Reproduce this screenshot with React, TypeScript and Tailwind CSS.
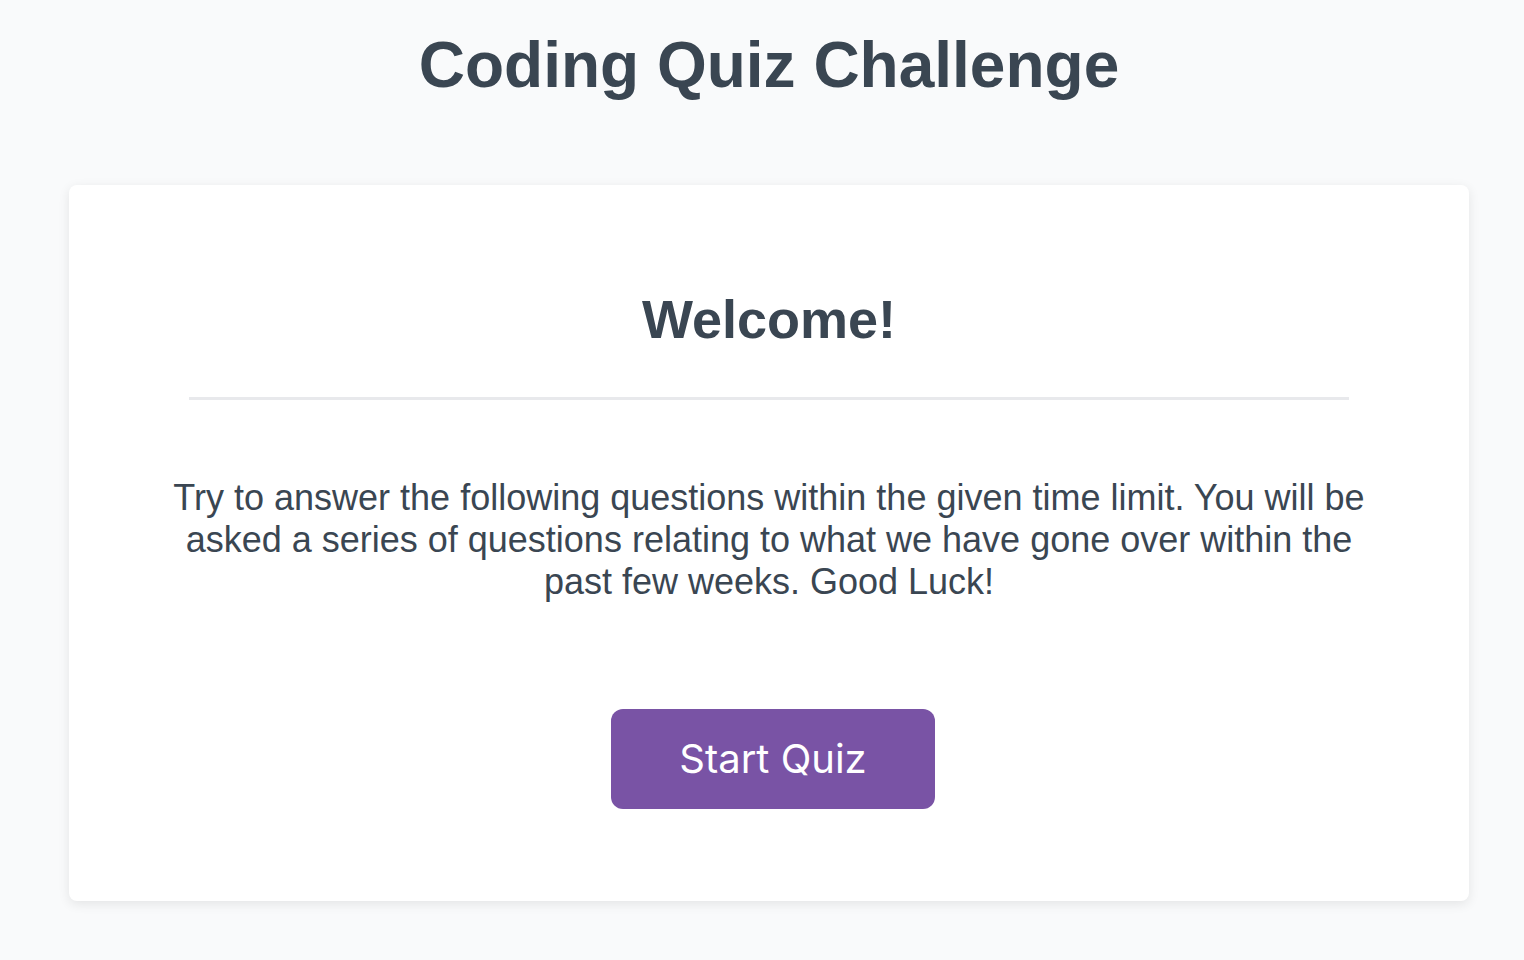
import React from 'react';

const App = () => {
  return (
    <div className="min-h-screen bg-[#f9fafb] text-[#3a4652] font-['Liberation_Sans',Arial,sans-serif]">
      <div className="ml-[69px] w-[1400px] pt-[27px]">
        <h1 className="text-center text-[64px] leading-[77px] font-bold">Coding Quiz Challenge</h1>

        {/* Welcome card */}
        <div className="mt-[81px] bg-white rounded-lg shadow-[0_3px_12px_rgba(0,0,0,0.09)] px-[120px] pt-[102px] pb-[92px] flex flex-col items-center">
          <h2 className="text-[54px] leading-[64px] font-bold">Welcome!</h2>
          <div className="w-full h-[3px] bg-[#e8e9ec] mt-[46px]" />
          <p className="mt-[77px] -mx-[20px] text-center text-[36px] leading-[42px]">
            Try to answer the following questions within the given time limit. You will be asked a series of
            questions relating to what we have gone over within the past few weeks. Good Luck!
          </p>
          <button className="mt-[106px] ml-2 w-[324px] h-[100px] rounded-xl bg-[#7953a5] text-white text-[40px] font-['Inter',sans-serif]">
            Start Quiz
          </button>
        </div>
      </div>
    </div>
  );
};

export default App;
